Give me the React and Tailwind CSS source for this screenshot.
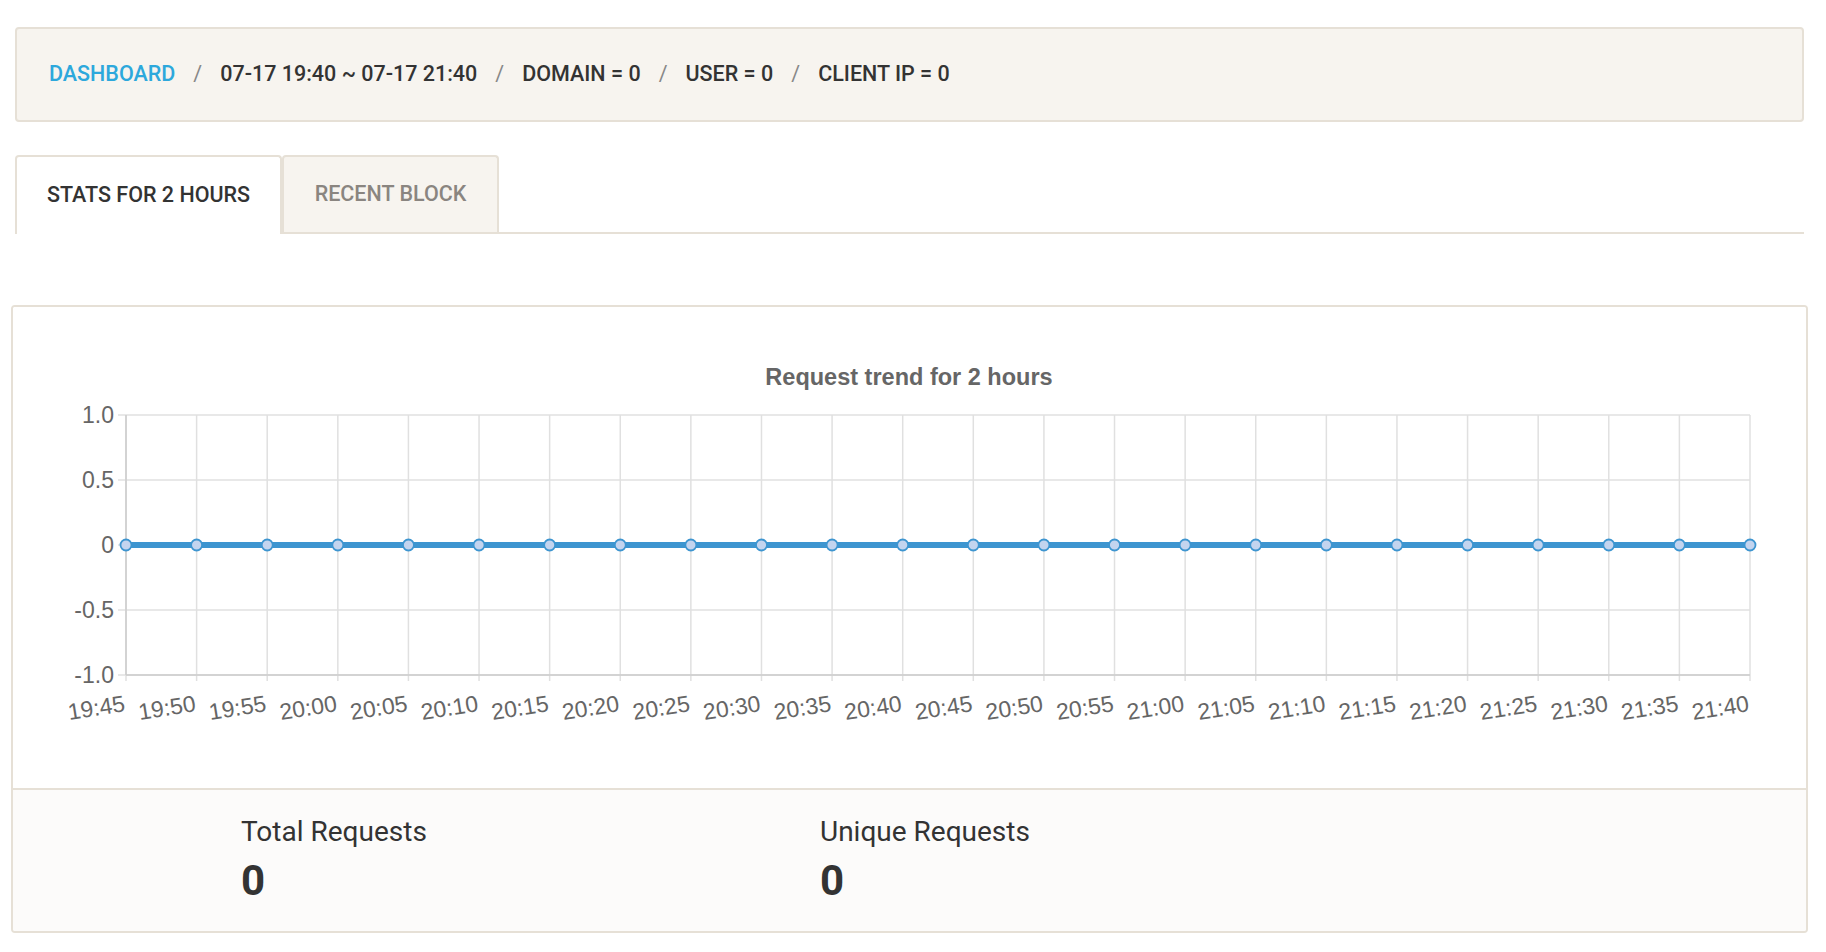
import React from "react";

const labels = [];
for (let i = 0; i < 24; i++) {
  const m = 19 * 60 + 45 + i * 5;
  labels.push(`${Math.floor(m / 60)}:${String(m % 60).padStart(2, "0")}`);
}

function Chart() {
  const L = 113, R = 1737, T = 108, B = 368;
  const step = (R - L) / 23;
  const ys = [
    ["1.0", T],
    ["0.5", T + (B - T) / 4],
    ["0", T + (B - T) / 2],
    ["-0.5", T + (3 * (B - T)) / 4],
    ["-1.0", B],
  ];
  const zero = T + (B - T) / 2;
  return (
    <svg width="1793" height="481" viewBox="0 0 1793 481" style={{ fontFamily: "Arial, 'Liberation Sans', sans-serif" }}>
      <text x="896" y="78" textAnchor="middle" fontSize="23.5" fontWeight="bold" fill="#666">Request trend for 2 hours</text>
      {ys.map(([t, y]) => (
        <g key={t}>
          <line x1={L - 8} x2={R} y1={y} y2={y} stroke="#e0e0e0" strokeWidth="1.5" />
          <text x={L - 12} y={y + 8} textAnchor="end" fontSize="23" fill="#666">{t}</text>
        </g>
      ))}
      {labels.map((l, i) => (
        <g key={l}>
          <line x1={L + i * step} x2={L + i * step} y1={T} y2={B + 6} stroke="#e0e0e0" strokeWidth="1.5" />
          <text x={L + i * step} y={B + 36} textAnchor="end" fontSize="23" fill="#666" transform={`rotate(-9 ${L + i * step} ${B + 36})`}>{l}</text>
        </g>
      ))}
      <line x1={L} x2={L} y1={T} y2={B} stroke="#ccc" strokeWidth="1.5" />
      <line x1={L} x2={R} y1={B} y2={B} stroke="#ccc" strokeWidth="1.5" />
      <line x1={L} x2={R} y1={zero} y2={zero} stroke="#3d95d0" strokeWidth="6" />
      {labels.map((l, i) => (
        <circle key={l} cx={L + i * step} cy={zero} r="5.5" fill="#c3d4ef" stroke="#3d95d0" strokeWidth="1.8" />
      ))}
    </svg>
  );
}

export default function App() {
  return (
    <div className="bg-white w-[1826px] h-[952px] pt-[27px]" style={{ fontFamily: "Roboto, 'Liberation Sans', sans-serif" }}>
      <div className="ml-[15px] w-[1789px] h-[95px] bg-[#f7f4ef] border-2 border-[#e6e0d6] rounded-[4px] flex items-center pl-[32px] text-[21.5px] font-medium text-[#333] gap-[18px]">
        <span className="text-[#2da8dc]">DASHBOARD</span>
        <span className="text-[#888] font-normal">/</span>
        <span>07-17 19:40 ~ 07-17 21:40</span>
        <span className="text-[#888] font-normal">/</span>
        <span>DOMAIN = 0</span>
        <span className="text-[#888] font-normal">/</span>
        <span>USER = 0</span>
        <span className="text-[#888] font-normal">/</span>
        <span>CLIENT IP = 0</span>
      </div>
      <div className="ml-[15px] w-[1789px] mt-[33px] flex border-b-2 border-[#e6e0d6] h-[79px]">
        <div className="w-[267px] h-[79px] -mb-[2px] bg-white border-2 border-b-0 border-[#e6e0d6] rounded-t-[4px] flex items-center justify-center text-[21.5px] font-medium text-[#333]">STATS FOR 2 HOURS</div>
        <div className="w-[217px] h-[77px] bg-[#f7f4ef] border-2 border-b-0 border-[#e6e0d6] rounded-t-[4px] flex items-center justify-center text-[21.5px] font-medium text-[#8a8580]">RECENT BLOCK</div>
      </div>
      <div className="ml-[11px] w-[1797px] mt-[71px] border-2 border-[#e6e0d6] rounded-[4px] overflow-hidden">
        <div className="h-[481px] bg-white">
          <Chart />
        </div>
        <div className="h-[143px] bg-[#fcfbfa] border-t-2 border-[#e6e0d6] flex pl-[228px] pt-[24px]">
          <div className="w-[579px]">
            <div className="text-[28px] text-[#333] leading-[36px]">Total Requests</div>
            <div className="text-[42px] font-bold text-[#333] leading-[50px] mt-[6px]">0</div>
          </div>
          <div>
            <div className="text-[28px] text-[#333] leading-[36px]">Unique Requests</div>
            <div className="text-[42px] font-bold text-[#333] leading-[50px] mt-[6px]">0</div>
          </div>
        </div>
      </div>
    </div>
  );
}
